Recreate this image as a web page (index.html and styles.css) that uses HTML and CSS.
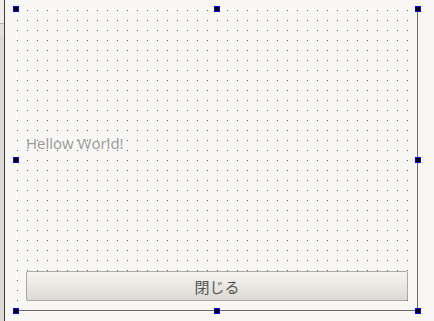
FILE: index.html
```html
<!DOCTYPE html>
<html lang="ja">
<head>
  <meta charset="UTF-8">
  <title>Form Designer</title>
  <link rel="stylesheet" href="styles.css">
</head>
<body>
  <div class="side">
    <div class="side-top"></div>
    <div class="side-tab"></div>
  </div>
  <div class="canvas">
    <div class="form">
      <div class="form-body">
        <span class="label">Hellow World!</span>
      </div>
      <button class="close-button">閉じる</button>

      <!-- selection handles -->
      <span class="handle tl"></span>
      <span class="handle tc"></span>
      <span class="handle tr"></span>
      <span class="handle ml"></span>
      <span class="handle mr"></span>
      <span class="handle bl"></span>
      <span class="handle bc"></span>
      <span class="handle br"></span>
    </div>
  </div>
</body>
</html>
```

FILE: styles.css
```css
body {
  margin: 0;
  height: 321px;
  display: flex;
  background-color: #f8f7f5;
  font-family: "Open Sans", "Noto Sans CJK JP", sans-serif;
  overflow: hidden;
}

.side {
  width: 4px;
  border-right: 1px solid #3c3c3c;
  display: flex;
  flex-direction: column;
  background-color: #dbd9d4;
}

.side-top {
  height: 23px;
  background-color: #efeeeb;
}

.side-tab {
  height: 12px;
  border-top: 1px solid #b8b6b0;
  background-color: #e3e1dc;
}

.canvas {
  flex: 1;
  padding: 9px 0 0 11px;
}

.form {
  position: relative;
  display: flex;
  flex-direction: column;
  padding: 0 8px 9px 9px;
  box-sizing: border-box;
  width: 402px;
  height: 302px;
  border-left: 1px solid #ffffff;
  border-top: 1px solid #ffffff;
  border-right: 1px solid #6a6a6a;
  border-bottom: 1px solid #6a6a6a;
  background-color: #f8f7f5;
  background-image: conic-gradient(from 270deg at 1px 1px, #5a5a5a 90deg, transparent 0);
  background-size: 10px 10px;
  background-origin: padding-box;
}

.form-body {
  flex: 1;
  display: flex;
  align-items: center;
  padding-top: 5px;
}

.label {
  color: #9a9a9a;
  font-size: 15px;
}

.close-button {
  height: 30px;
  width: 382px;
  border: 1px solid #aaa9a5;
  border-radius: 2px;
  background: linear-gradient(#f5f4ee, #dcdad4);
  color: #555;
  font-family: "Noto Sans CJK JP", sans-serif;
  font-size: 15px;
  padding: 0;
}

.handle {
  position: absolute;
  width: 4px;
  height: 4px;
  background-color: #000;
  border: 1px solid #0000ff;
}

.tl, .tc, .tr { top: -4px; }
.ml, .mr { top: 147px; }
.bl, .bc, .br { bottom: -4px; }
.tl, .ml, .bl { left: -4px; }
.tc, .bc { left: 197px; }
.tr, .mr, .br { right: -4px; }
```
